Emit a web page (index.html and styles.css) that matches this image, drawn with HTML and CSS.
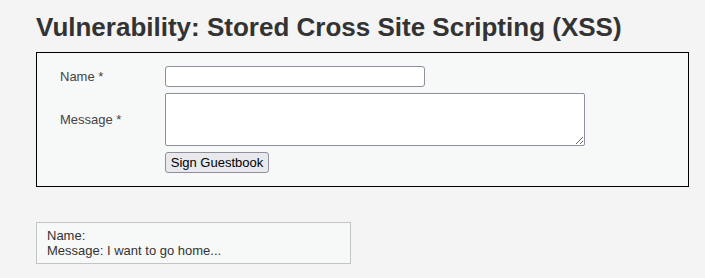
FILE: index.html
```html
<!DOCTYPE html>
<html>
<head>
<meta charset="utf-8">
<link rel="stylesheet" href="styles.css">
</head>
<body>
<div class="page">
  <h1 class="title">Vulnerability: Stored Cross Site Scripting (XSS)</h1>
  <div class="code-area">
    <form class="guest-form">
      <label class="label" for="txtName">Name *</label>
      <input class="name-input" id="txtName" type="text">
      <label class="label" for="mtxMessage">Message *</label>
      <textarea class="msg-input" id="mtxMessage"></textarea>
      <span class="label"></span>
      <div><button class="sign-btn" type="button">Sign Guestbook</button></div>
    </form>
  </div>
  <div class="comment">
    <div>Name: </div>
    <div>Message: I want to go home...</div>
  </div>
</div>
</body>
</html>
```

FILE: styles.css
```css
html, body {
  margin: 0;
  padding: 0;
  background: #f4f4f4;
}
body {
  font-family: "Liberation Sans", Arial, sans-serif;
  font-size: 13px;
  color: #333;
}
.page {
  padding: 11px 0 0 36px;
}
.title {
  margin: 0 0 9px 0;
  font-size: 26px;
  line-height: 32px;
  font-weight: bold;
  color: #333;
}
.code-area {
  border: 1px solid #000;
  background: #f7f8f8;
  padding: 13px 0 13px 23px;
  box-sizing: border-box;
  width: 653px;
  height: 135px;
}
.guest-form {
  display: grid;
  grid-template-columns: 105px auto;
  row-gap: 6px;
  align-items: center;
}
.label {
  color: #444;
}
.name-input {
  box-sizing: border-box;
  width: 260px;
  height: 21px;
  border: 1px solid #8f8f9d;
  border-radius: 3px;
  background: #fff;
  margin: 0;
  padding: 0 3px;
  display: block;
}
.msg-input {
  box-sizing: border-box;
  width: 420px;
  height: 53px;
  border: 1px solid #8f8f9d;
  border-radius: 2px;
  background: #fff;
  margin: 0;
  display: block;
  resize: both;
}
.sign-btn {
  box-sizing: border-box;
  height: 21px;
  width: 104px;
  padding: 0;
  margin: 0;
  font-family: "Liberation Sans", Arial, sans-serif;
  font-size: 13px;
  color: #000;
  background: #e9e9ed;
  border: 1px solid #8f8f9d;
  border-radius: 3px;
  display: block;
}
.comment {
  margin-top: 35px;
  width: 315px;
  box-sizing: border-box;
  border: 1px solid #c4c4c4;
  background: #f7f8f8;
  padding: 5px 10px 5px 10px;
  line-height: 15px;
  color: #333;
}
```
